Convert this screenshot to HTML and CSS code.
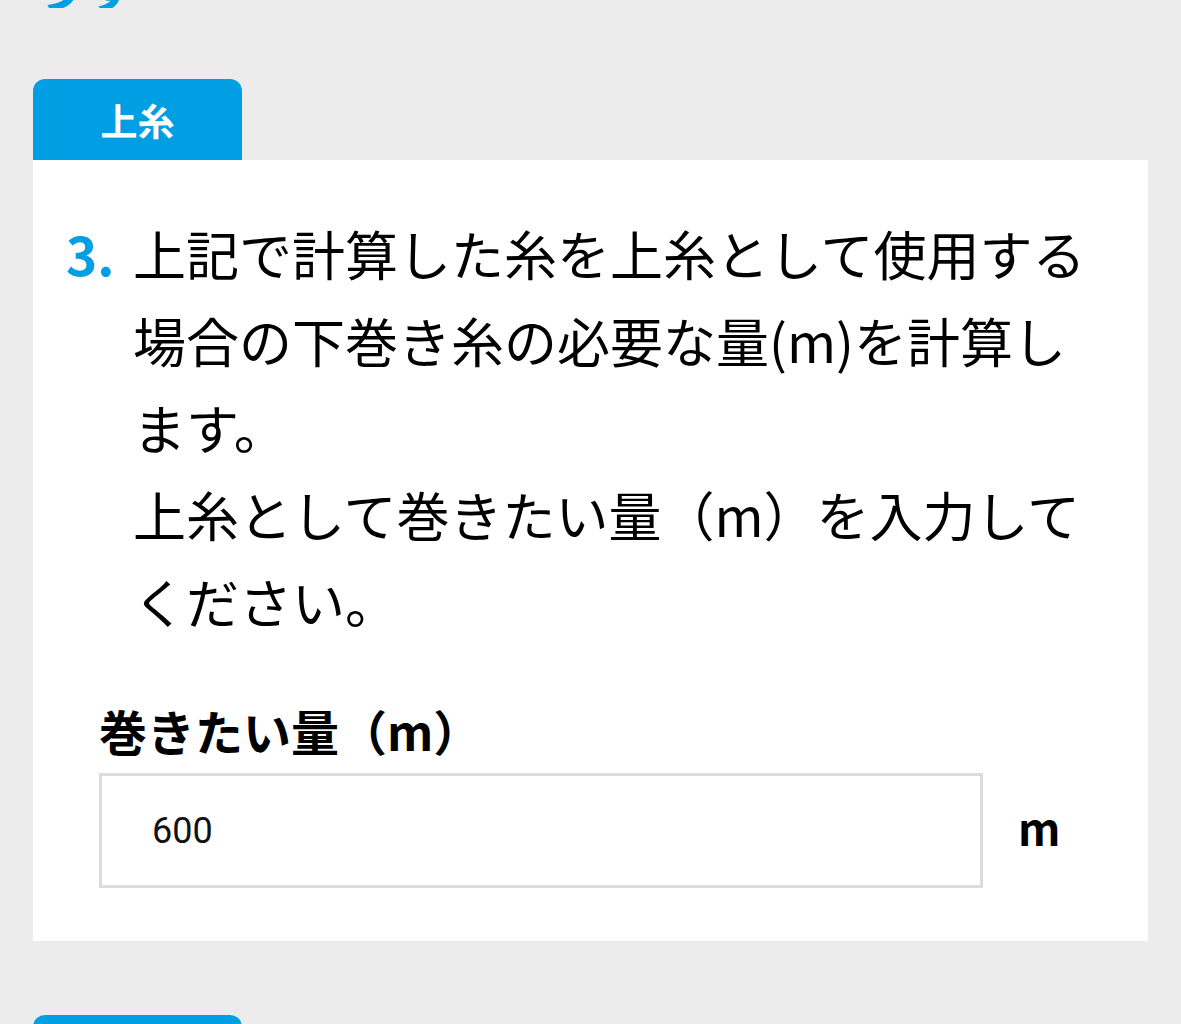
FILE: index.html
```html
<!DOCTYPE html>
<html lang="ja">
<head>
    <meta charset="UTF-8">
    <meta name="viewport" content="width=device-width, initial-scale=1.0">
    <title>下巻き糸計算</title>
    <link rel="stylesheet" href="styles.css">
</head>
<body>
    <div class="page">
        <div class="prev-tail"><span>うす</span></div>

        <section class="section">
            <div class="tab">上糸</div>
            <div class="card">
                <div class="step">
                    <div class="step-num">3.</div>
                    <p class="step-text">上記で計算した糸を上糸として使用する場合の下巻き糸の必要な量(m)を計算します。<br>上糸として巻きたい量（m）を入力してください。</p>
                </div>

                <div class="field">
                    <label for="length">巻きたい量（m）</label>
                    <div class="input-row">
                        <input type="text" id="length" value="600">
                        <span class="unit">m</span>
                    </div>
                </div>
            </div>
        </section>

        <section class="section next">
            <div class="tab"></div>
        </section>
    </div>
</body>
</html>
```

FILE: styles.css
```css
body {
    margin: 0;
    background-color: #ececec;
    font-family: "Noto Sans CJK JP", "Noto Sans", sans-serif;
    color: #000;
}
.page {
    padding: 0 33px;
}
.prev-tail {
    height: 8px;
    overflow: hidden;
    display: flex;
    align-items: flex-end;
    color: #009fe3;
    font-size: 52px;
    font-weight: bold;
    line-height: 1;
}
.prev-tail span {
    margin-bottom: -4px;
}
.section {
    margin-top: 71px;
}
.section.next {
    margin-top: 74px;
}
.tab {
    width: 209px;
    height: 81px;
    background-color: #009fe3;
    border-radius: 12px 12px 0 0;
    color: white;
    font-size: 37px;
    font-weight: bold;
    display: flex;
    align-items: center;
    justify-content: center;
}
.card {
    background-color: white;
    padding: 50px 50px 53px 33px;
}
.step {
    display: flex;
    font-size: 53px;
    line-height: 87px;
}
.step-num {
    flex: 0 0 67px;
    color: #009fe3;
    font-weight: bold;
}
.step-text {
    margin: 0;
}
.field {
    margin: 49px 0 0 33px;
}
label {
    display: block;
    font-size: 48px;
    font-weight: bold;
    line-height: 72px;
    margin-bottom: 7px;
}
.input-row {
    display: flex;
    align-items: center;
}
input {
    width: 884px;
    height: 115px;
    box-sizing: border-box;
    border: 3px solid #dcdcdc;
    padding: 0 0 0 50px;
    font-family: Roboto, "Noto Sans", sans-serif;
    font-size: 36px;
    color: #111;
    outline: none;
}
.unit {
    margin: 0 0 8px 35px;
    font-size: 44px;
    font-weight: bold;
}
```
